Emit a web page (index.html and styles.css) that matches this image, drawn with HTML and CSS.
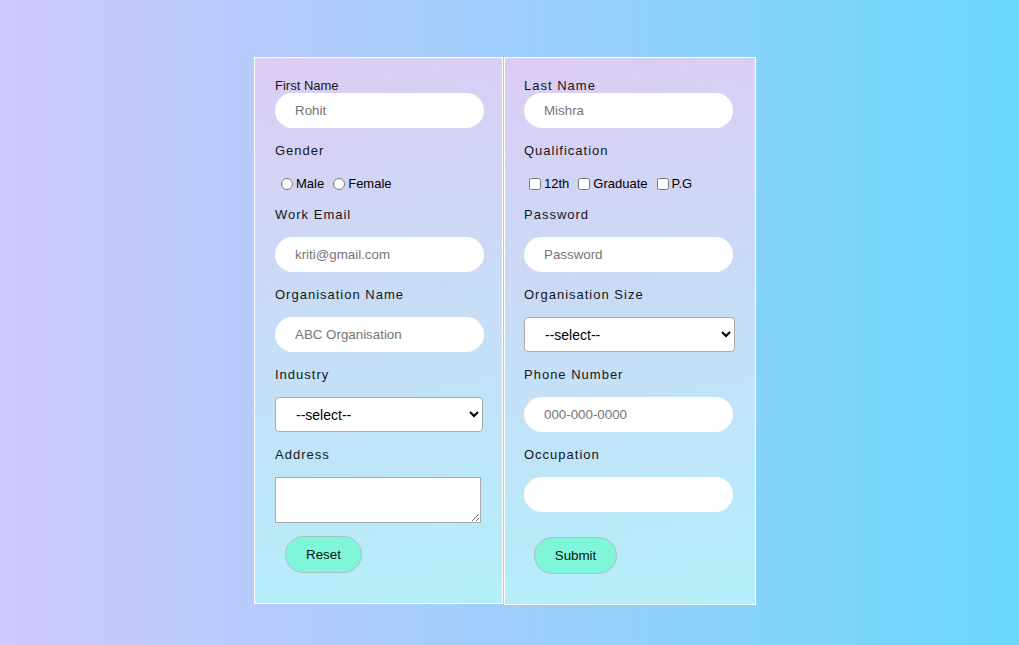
FILE: index.html
```html
<!DOCTYPE html>
<html>
<head>
<meta charset="utf-8">
<link rel="stylesheet" href="styles.css">
</head>
<body>
<div class="wrap">
  <form class="panel left">
    <label class="lbl first">First Name</label>
    <input class="pill" type="text" placeholder="Rohit">
    <label class="lbl">Gender</label>
    <div class="choices"><input type="radio" name="g"><span class="opt">Male</span><input type="radio" name="g"><span class="opt">Female</span></div>
    <label class="lbl">Work Email</label>
    <input class="pill" type="text" placeholder="kriti@gmail.com">
    <label class="lbl">Organisation Name</label>
    <input class="pill" type="text" placeholder="ABC Organisation">
    <label class="lbl">Industry</label>
    <select class="sel sel-left"><option>--select--</option></select>
    <label class="lbl">Address</label>
    <textarea class="area"></textarea>
    <button type="button" class="btn reset">Reset</button>
  </form>
  <form class="panel right">
    <label class="lbl top">Last Name</label>
    <input class="pill" type="text" placeholder="Mishra">
    <label class="lbl">Qualification</label>
    <div class="choices"><input type="checkbox"><span class="opt">12th</span><input type="checkbox"><span class="opt">Graduate</span><input type="checkbox"><span class="opt">P.G</span></div>
    <label class="lbl">Password</label>
    <input class="pill" type="text" placeholder="Password">
    <label class="lbl">Organisation Size</label>
    <select class="sel sel-right"><option>--select--</option></select>
    <label class="lbl">Phone Number</label>
    <input class="pill" type="text" placeholder="000-000-0000">
    <label class="lbl">Occupation</label>
    <input class="pill" type="text">
    <button type="button" class="btn submit">Submit</button>
  </form>
</div>
</body>
</html>
```
FILE: styles.css
```css
html, body {
  margin: 0;
  height: 100%;
}
body {
  background: linear-gradient(90deg, #cec8fe 0%, #9fcefa 50%, #6ad7fb 100%);
  font-family: "Liberation Sans", Arial, sans-serif;
  color: #15151c;
}
.wrap {
  display: flex;
  align-items: flex-start;
  padding: 57px 0 0 254px;
}
.panel {
  display: flex;
  flex-direction: column;
  align-items: flex-start;
  border: 1px solid #fff;
  padding: 19px 20px 30px 20px;
  background: linear-gradient(170deg, #ddccf4 0%, #c8dcf6 45%, #b3f0fa 100%);
}
.left { width: 207px; }
.right { width: 209px; margin-left: 1px; padding-left: 19px; padding-right: 22px; }
.lbl {
  display: block;
  font-size: 13px;
  line-height: 16px;
  letter-spacing: 1px;
  margin: 14px 0 14px;
  padding-top: 1px;
}
.lbl.first,
.lbl.top {
  margin: 0;
  padding-top: 1px;
  line-height: 15px;
}
.lbl.first { letter-spacing: 0; }
.pill {
  box-sizing: border-box;
  width: 209px;
  height: 35px;
  border: none;
  border-radius: 18px;
  background: #fff;
  padding: 0 20px;
  font-family: "Liberation Sans", Arial, sans-serif;
  font-size: 13.333px;
  outline: none;
  margin: 0;
}
.pill::placeholder { color: #757575; }
.choices {
  display: flex;
  align-items: center;
  height: 17px;
  margin-top: 2px;
  font-size: 13px;
  color: #000;
}
.choices input {
  margin: 0 3px 0 5px;
  width: 12px;
  height: 12px;
}
.choices input:first-child { margin-left: 6px; }
.right .choices input:first-child { margin-left: 5px; }
.opt { margin-right: 4px; }
.sel {
  box-sizing: border-box;
  height: 35px;
  border: 1px solid #aaa;
  border-radius: 4px;
  background: #fff;
  padding: 0 0 0 16px;
  font-family: "Liberation Sans", Arial, sans-serif;
  font-size: 14px;
  color: #000;
  margin: 0;
}
.sel-left { width: 208px; }
.sel-right { width: 211px; }
.area {
  display: block;
  box-sizing: border-box;
  width: 206px;
  height: 46px;
  border: 1px solid #aaa;
  margin: 0;
  background: #fff;
}
.btn {
  box-sizing: border-box;
  height: 37px;
  border: 1px solid #aebfc0;
  border-radius: 19px;
  background: #7ff6d9;
  font-family: "Liberation Sans", Arial, sans-serif;
  font-size: 13.333px;
  color: #111;
  margin-left: 10px;
  padding: 0;
}
.reset { width: 77px; margin-top: 13px; }
.submit { width: 83px; margin-top: 25px; }
```
